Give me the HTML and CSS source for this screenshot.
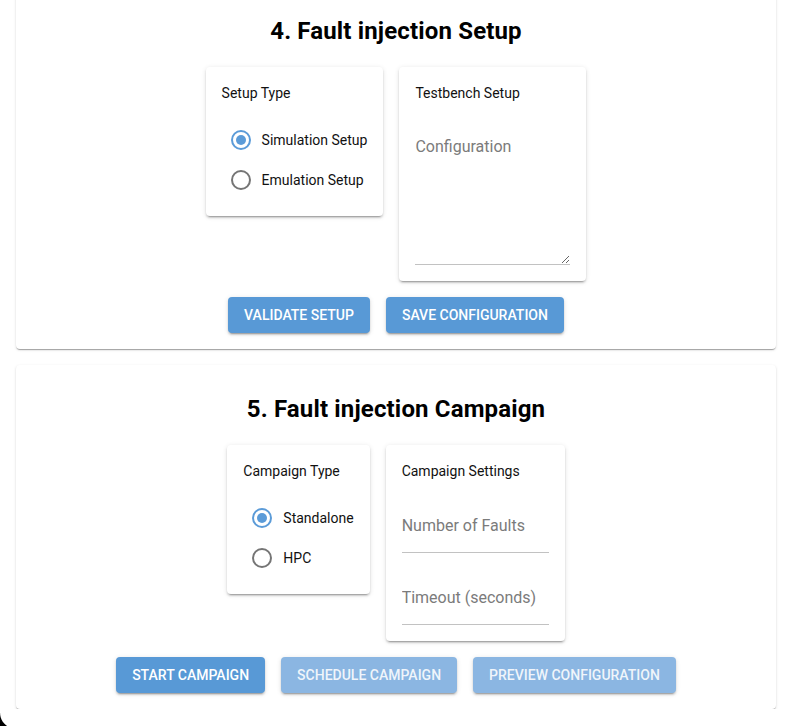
FILE: index.html
```html
<!DOCTYPE html>
<html lang="en">
<head>
<meta charset="utf-8">
<title>Fault injection</title>
<link rel="stylesheet" href="styles.css">
</head>
<body>
<div class="page">
  <section class="card card-first">
    <h2 class="card-title">4. Fault injection Setup</h2>
    <div class="panels">
      <div class="panel">
        <div class="panel-label">Setup Type</div>
        <div class="radio-group">
          <label class="radio-row"><span class="radio checked"></span><span class="radio-text">Simulation Setup</span></label>
          <label class="radio-row"><span class="radio"></span><span class="radio-text">Emulation Setup</span></label>
        </div>
      </div>
      <div class="panel">
        <div class="panel-label">Testbench Setup</div>
        <textarea class="field textarea" placeholder="Configuration"></textarea>
      </div>
    </div>
    <div class="actions">
      <button class="btn">Validate Setup</button>
      <button class="btn">Save Configuration</button>
    </div>
  </section>

  <section class="card">
    <h2 class="card-title">5. Fault injection Campaign</h2>
    <div class="panels">
      <div class="panel">
        <div class="panel-label">Campaign Type</div>
        <div class="radio-group">
          <label class="radio-row"><span class="radio checked"></span><span class="radio-text">Standalone</span></label>
          <label class="radio-row"><span class="radio"></span><span class="radio-text">HPC</span></label>
        </div>
      </div>
      <div class="panel">
        <div class="panel-label">Campaign Settings</div>
        <input class="field input" type="text" placeholder="Number of Faults">
        <input class="field input" type="text" placeholder="Timeout (seconds)">
      </div>
    </div>
    <div class="actions">
      <button class="btn">Start Campaign</button>
      <button class="btn btn-muted">Schedule Campaign</button>
      <button class="btn btn-muted">Preview Configuration</button>
    </div>
  </section>
</div>
<div class="window-corner"></div>
</body>
</html>
```

FILE: styles.css
```css
html, body {
  margin: 0;
  padding: 0;
  background: #ffffff;
  font-family: Roboto, "Liberation Sans", Arial, sans-serif;
  color: #000;
}

.page {
  padding: 0 15px 0 16px;
  display: flex;
  flex-direction: column;
  gap: 16px;
}

.card {
  background: #fff;
  border-radius: 4px;
  box-shadow: 0 2px 1px -1px rgba(0,0,0,0.2), 0 1px 1px 0 rgba(0,0,0,0.14), 0 1px 3px 0 rgba(0,0,0,0.12);
  padding: 28px 16px 16px;
  display: flex;
  flex-direction: column;
  align-items: center;
}

.card-first {
  margin-top: -13px;
}

.card-title {
  margin: 0;
  font-size: 24px;
  line-height: 32px;
  font-weight: 700;
  letter-spacing: 0.15px;
  text-align: center;
}

.panels {
  margin-top: 20px;
  display: flex;
  gap: 16px;
  align-items: flex-start;
}

.panel {
  background: #fff;
  border-radius: 4px;
  box-shadow: 0 3px 1px -2px rgba(0,0,0,0.2), 0 2px 2px 0 rgba(0,0,0,0.14), 0 1px 5px 0 rgba(0,0,0,0.12);
  padding: 16px;
  display: flex;
  flex-direction: column;
}

.panel-label {
  font-size: 14px;
  line-height: 20px;
  color: #111;
}

.radio-group {
  margin-top: 17px;
  display: flex;
  flex-direction: column;
}

.radio-row {
  height: 40px;
  display: flex;
  align-items: center;
}

.radio {
  box-sizing: border-box;
  width: 20px;
  height: 20px;
  margin-left: 9px;
  border: 2px solid #757575;
  border-radius: 50%;
  display: flex;
  align-items: center;
  justify-content: center;
}

.radio.checked {
  border-color: #5b9bd8;
}

.radio.checked::after {
  content: "";
  width: 10px;
  height: 10px;
  border-radius: 50%;
  background: #5b9bd8;
}

.radio-text {
  margin-left: 11px;
  font-size: 14px;
  line-height: 20px;
  color: #111;
}

.field {
  box-sizing: border-box;
  font-family: inherit;
  font-size: 16px;
  line-height: 24px;
  color: #222;
  border: none;
  border-bottom: 1px solid #c2c2c2;
  outline: none;
  background: transparent;
  margin: 20px 0 0;
  padding: 12px 0 15px;
}

.field::placeholder {
  color: #7b7b7b;
  opacity: 1;
}

.textarea {
  width: 155px;
  height: 142px;
  resize: vertical;
  display: block;
}

.input {
  width: 147px;
  height: 52px;
  display: block;
}

.input + .input {
  margin-top: 20px;
}

.actions {
  margin-top: 16px;
  display: flex;
  gap: 16px;
}

.btn {
  height: 36px;
  padding: 0 16px;
  border: none;
  border-radius: 4px;
  background: #5899d6;
  color: #fff;
  font-family: inherit;
  font-size: 14px;
  font-weight: 500;
  letter-spacing: 0;
  text-transform: uppercase;
  box-shadow: 0 3px 1px -2px rgba(0,0,0,0.2), 0 2px 2px 0 rgba(0,0,0,0.14), 0 1px 5px 0 rgba(0,0,0,0.12);
  cursor: pointer;
}

.btn-muted {
  background: #8bb6e2;
  color: rgba(255,255,255,0.88);
}

.window-corner {
  position: fixed;
  left: 0;
  bottom: 0;
  width: 16px;
  height: 13px;
  background: radial-gradient(circle 15.6px at 15.6px 0, transparent 15px, #000 16px);
}
```
